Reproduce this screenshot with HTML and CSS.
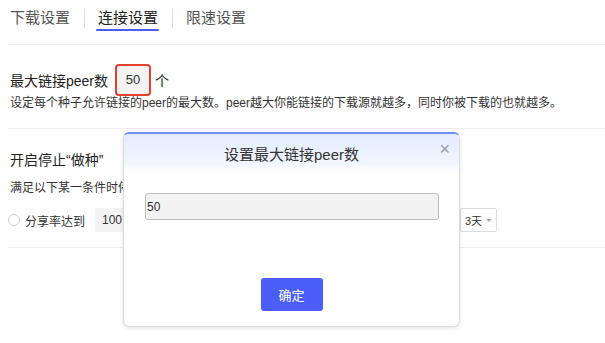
FILE: index.html
```html
<!DOCTYPE html>
<html lang="zh-CN">
  <head>
    <meta charset="UTF-8" />
    <meta name="viewport" content="width=device-width, initial-scale=1.0" />
    <title>连接设置</title>
    <link rel="stylesheet" href="styles.css">
  </head>
  <body>
    <div class="tabs">
      <span class="tab">下载设置</span>
      <span class="tab-sep"></span>
      <span class="tab active">连接设置</span>
      <span class="tab-sep"></span>
      <span class="tab">限速设置</span>
    </div>

    <div class="section peers">
      <div class="peer-row">
        <span class="label">最大链接peer数</span>
        <span class="peer-input">50</span>
        <span class="unit">个</span>
      </div>
      <p class="desc">设定每个种子允许链接的peer的最大数。peer越大你能链接的下载源就越多，同时你被下载的也就越多。</p>
    </div>

    <div class="section seeding">
      <h3>开启停止“做种”</h3>
      <p class="desc">满足以下某一条件时停止做种</p>
      <div class="seed-row">
        <span class="radio"></span>
        <span class="radio-label">分享率达到</span>
        <span class="ratio-input">100</span>
        <span class="radio-label">或做种时间达到</span>
        <span class="select">3天 <i class="caret"></i></span>
      </div>
    </div>

    <div class="modal">
      <div class="modal-head">
        设置最大链接peer数
        <span class="close">×</span>
      </div>
      <div class="modal-body">
        <input class="modal-input" type="text" value="50" />
      </div>
      <div class="modal-foot">
        <button class="btn-ok">确定</button>
      </div>
    </div>
  </body>
</html>
```

FILE: styles.css
```css
* {
  box-sizing: border-box;
  margin: 0;
  padding: 0;
}
body {
  font-family: "Liberation Sans", "Noto Sans CJK SC", sans-serif;
  background: #fff;
  color: #333;
  width: 605px;
  height: 343px;
  overflow: hidden;
  position: relative;
}
.tabs {
  display: flex;
  align-items: center;
  height: 45px;
  margin-left: 8px;
  padding-left: 2px;
  padding-bottom: 8px;
  border-bottom: 1px solid #ececec;
}
.tab {
  font-size: 15px;
  line-height: 22px;
  color: #555;
  position: relative;
}
.tab.active {
  color: #222;
}
.tab.active::after {
  content: "";
  position: absolute;
  left: -2px;
  right: -1px;
  bottom: -2px;
  height: 2px;
  background: #4a5cf0;
  border-radius: 1px;
}
.tab-sep {
  width: 1px;
  height: 19px;
  background: #ddd;
  margin: 0 13px 0 14px;
}
.section {
  margin-left: 8px;
  padding-left: 2px;
  border-bottom: 1px solid #ececec;
}
.peers {
  padding-top: 19px;
  padding-bottom: 17px;
}
.peer-row {
  display: flex;
  align-items: center;
  height: 31px;
}
.label {
  font-size: 14px;
  color: #222;
}
.peer-input {
  width: 36px;
  height: 32px;
  margin-left: 7px;
  border: 2px solid #e5412d;
  border-radius: 4px;
  background: #f2f2f2;
  font-size: 13px;
  display: flex;
  align-items: center;
  justify-content: center;
}
.unit {
  font-size: 14px;
  margin-left: 4px;
  color: #222;
}
.desc {
  font-size: 12px;
  line-height: 16px;
  color: #333;
}
.seeding {
  padding-top: 21px;
  padding-bottom: 15px;
}
.seeding h3 {
  font-size: 14px;
  font-weight: normal;
  line-height: 20px;
  color: #222;
}
.seeding .desc {
  margin-top: 10px;
}
.seed-row {
  display: flex;
  align-items: center;
  height: 24px;
  margin-top: 12px;
  width: 487px;
}
.radio {
  width: 12px;
  height: 12px;
  margin-left: -2px;
  border: 1px solid #ccc;
  border-radius: 50%;
}
.radio-label {
  font-size: 12px;
  margin-left: 5px;
  color: #333;
}
.ratio-input {
  width: 90px;
  height: 24px;
  margin-left: 10px;
  padding-left: 7px;
  background: #f4f4f4;
  font-size: 12px;
  line-height: 24px;
}
.select {
  margin-left: auto;
  height: 24px;
  padding: 0 4px 0 4px;
  border: 1px solid #ddd;
  border-radius: 2px;
  font-size: 11px;
  display: flex;
  align-items: center;
  gap: 4px;
  background: #fff;
}
.caret {
  width: 0;
  height: 0;
  border-left: 3px solid transparent;
  border-right: 3px solid transparent;
  border-top: 3px solid #aaa;
}
.modal {
  position: absolute;
  left: 123px;
  top: 132px;
  width: 337px;
  height: 195px;
  background: #fff;
  border: 1px solid #ddd;
  border-top: 2px solid #6d8ff2;
  border-radius: 6px;
  box-shadow: 0 1px 4px rgba(0, 0, 0, 0.12);
  display: flex;
  flex-direction: column;
}
.modal-head {
  height: 38px;
  border-radius: 5px 5px 0 0;
  background: linear-gradient(#e2ebfd, #f2f6ff 80%, #fff);
  font-size: 15px;
  color: #333;
  display: flex;
  align-items: center;
  justify-content: center;
  position: relative;
}
.close {
  position: absolute;
  right: 9px;
  top: 5px;
  font-size: 18px;
  color: #999;
  font-weight: 300;
}
.modal-body {
  padding: 21px 20px 0 21px;
}
.modal-input {
  width: 100%;
  height: 27px;
  border: 1px solid #bbb;
  border-radius: 3px;
  background: #f2f2f2;
  font-family: inherit;
  font-size: 12px;
  color: #333;
  padding-left: 1px;
  outline: none;
}
.modal-foot {
  margin-top: auto;
  padding-bottom: 15px;
  display: flex;
  justify-content: center;
}
.btn-ok {
  width: 62px;
  height: 33px;
  border: none;
  border-radius: 3px;
  background: #4a5ef7;
  color: #fff;
  font-family: inherit;
  font-size: 13px;
}
```
